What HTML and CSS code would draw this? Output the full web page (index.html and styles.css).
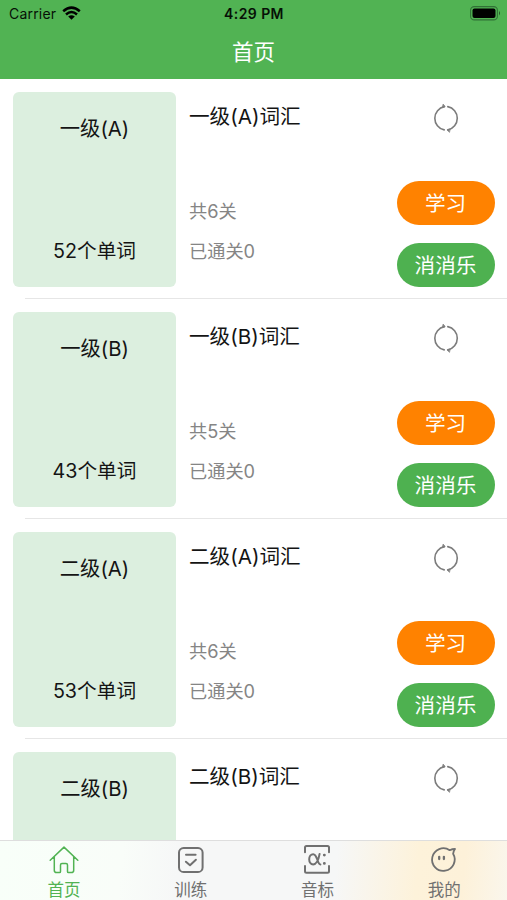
FILE: index.html
```html
<!DOCTYPE html>
<html lang="zh-CN">
<head>
<meta charset="utf-8">
<title>首页</title>
<link rel="stylesheet" href="styles.css">
</head>
<body>
<svg class="defs" aria-hidden="true">
  <symbol id="refresh" viewBox="0 0 28 32">
    <g fill="none" stroke="#7c7c7c" stroke-width="1.6" stroke-linecap="round" stroke-linejoin="round">
      <path d="M12.2 27.9A11.9 11.9 0 0 1 12.4 4.6M15.8 4.6A11.9 11.9 0 0 1 15.8 27.9"/>
      <path d="M11.4 2.4L13.1 4.6L10.6 5.4Z M17.2 30.1L15.3 27.9L17.9 27.1Z" fill="#7c7c7c" stroke-width=".8"/>
    </g>
  </symbol>
</svg>
<div class="app">
  <header class="header">
    <div class="status">
      <div class="carrier">Carrier
        <svg class="wifi" viewBox="0 0 19 14">
          <path d="M9.5 13.7L6.2 10.5Q9.5 7.8 12.8 10.5Z"/>
          <g fill="none" stroke="#000" stroke-width="2.5"><path d="M1.2 5.3Q9.5-2 17.8 5.3M4 8.5Q9.5 3.5 15 8.5"/></g>
        </svg>
      </div>
      <div class="clock">4:29 PM</div>
      <svg class="battery" viewBox="0 0 31 15">
        <rect x=".6" y=".6" width="26.8" height="13.3" rx="3.7" fill="none" stroke="#317136" stroke-width="1.1"/>
        <rect x="2.5" y="2.5" width="23" height="9.5" rx="2"/>
        <path d="M29 5Q31 7.2 29 9.5Z" fill="#26582a"/>
      </svg>
    </div>
    <h1 class="title">首页</h1>
  </header>
  <main class="list">
    <section class="row">
      <div class="cover"><span>一级(A)</span><span class="words">52个单词</span></div>
      <div class="info"><h2>一级(A)词汇</h2><p class="total">共6关</p><p>已通关0</p></div>
      <div class="actions"><svg class="refresh"><use href="#refresh"/></svg><button class="study">学习</button><button>消消乐</button></div>
    </section>
    <section class="row">
      <div class="cover"><span>一级(B)</span><span class="words">43个单词</span></div>
      <div class="info"><h2>一级(B)词汇</h2><p class="total">共5关</p><p>已通关0</p></div>
      <div class="actions"><svg class="refresh"><use href="#refresh"/></svg><button class="study">学习</button><button>消消乐</button></div>
    </section>
    <section class="row">
      <div class="cover"><span>二级(A)</span><span class="words">53个单词</span></div>
      <div class="info"><h2>二级(A)词汇</h2><p class="total">共6关</p><p>已通关0</p></div>
      <div class="actions"><svg class="refresh"><use href="#refresh"/></svg><button class="study">学习</button><button>消消乐</button></div>
    </section>
    <section class="row">
      <div class="cover"><span>二级(B)</span></div>
      <div class="info"><h2>二级(B)词汇</h2></div>
      <div class="actions"><svg class="refresh"><use href="#refresh"/></svg></div>
    </section>
  </main>
  <nav class="tabs">
    <a class="tab active">
      <svg viewBox="0 0 32 32"><path d="M2.2 16.2L16 3.1L29.8 16.2M6.3 12.6V26.2Q6.3 28.6 8.7 28.6H11.5Q12.5 28.6 12.5 27.4V21Q12.5 19.6 14 19.6H18Q19.5 19.6 19.5 21V27.4Q19.5 28.6 20.5 28.6H23.3Q25.7 28.6 25.7 26.2V12.6" stroke-width="1.5"/></svg>
      首页</a>
    <a class="tab">
      <svg viewBox="0 0 32 32"><rect x="4" y="4" width="23.6" height="24" rx="4.6"/><path d="M11 10.8H20.6M10.9 17.7L15 21.3L20.9 15.7"/></svg>
      训练</a>
    <a class="tab">
      <svg viewBox="0 0 32 32"><path d="M4 8.2V3.5Q4 2 5.5 2H26.5Q28 2 28 3.5V8.2M4 22V27.3Q4 28.8 5.5 28.8H26.5Q28 28.8 28 27.3V22M18.6 9.9Q16.8 20.4 12.1 20.4C9.8 20.4 8.2 18.2 8.2 15.3S9.8 10.2 12.2 10.2C16.4 10.2 16.4 20.5 19.4 20.5"/><path d="M23.3 11.1H23.4M23.3 19.4H23.4" stroke-width="2.8"/></svg>
      音标</a>
    <a class="tab">
      <svg viewBox="0 0 32 32"><path d="M21.7 6.2Q24.1 5.1 27 5Q25.7 6.7 25.1 9.8A11.3 11.3 0 1 1 21.7 6.2Z" stroke-width="1.8"/><path d="M11.2 12.8V15.1M15.9 12.8V15.1" stroke-width="2.3"/></svg>
      我的</a>
  </nav>
</div>
</body>
</html>
```
FILE: styles.css
```css
* { box-sizing: border-box; margin: 0; padding: 0; }

body {
  background: #fff;
  color: #141414;
  font-family: Inter, "Noto Sans CJK SC", sans-serif;
}

.defs { display: none; }

.app {
  display: flex;
  flex-direction: column;
  width: 507px;
  height: 900px;
  overflow: hidden;
}

.header { flex: none; height: 79px; background: #51b353; }

.status {
  display: grid;
  grid-template-columns: 1fr auto 1fr;
  align-items: center;
  height: 27px;
  padding: 0 6px 0 9px;
  color: #061006;
  font-size: 14px;
  line-height: 27px;
}

.carrier { display: flex; align-items: center; gap: 6px; letter-spacing: .2px; }
.wifi { width: 19px; height: 14px; margin-top: -1px; }
.clock { margin-left: -2px; font-weight: 600; letter-spacing: .42px; }
.battery { justify-self: end; width: 31px; height: 15px; }

.title {
  color: #fff;
  font-size: 21.5px;
  font-weight: 400;
  line-height: 50px;
  text-align: center;
}

.list { flex: 1; min-height: 0; overflow: hidden; padding-top: 13px; }

.row {
  display: grid;
  grid-template-columns: 163px 1fr 98px;
  column-gap: 13px;
  height: 207px;
  margin-bottom: 13px;
  padding: 0 12px 12px 13px;
  background: linear-gradient(#e6e6e6, #e6e6e6) 25px 100% / 482px 1px no-repeat;
}

.cover {
  display: flex;
  flex-direction: column;
  align-items: center;
  justify-content: space-between;
  padding: 22px 0 21px;
  border-radius: 6px;
  background: #dcefdf;
  font-size: 20.3px;
  line-height: 30px;
}

.words { font-size: 19.7px; }

.info h2 {
  padding-top: 10px;
  font-size: 20.6px;
  font-weight: 400;
  line-height: 30px;
}

.info p { color: #858585; font-size: 18.2px; line-height: 26px; }
.info .total { margin: 66px 0 14px; }

.actions { display: flex; flex-direction: column; align-items: center; }

.refresh { width: 28px; height: 32px; margin-top: 10px; }

.actions button {
  width: 98px;
  height: 44px;
  padding: 2px 1px 0 0;
  border: 0;
  border-radius: 22px;
  background: #4eb150;
  color: #fff;
  font: inherit;
  font-size: 20.6px;
  line-height: 42px;
}

.actions .study { margin: 46.5px 0 18px; background: #ff8200; }

.tabs {
  display: grid;
  grid-template-columns: repeat(4, 1fr);
  flex: none;
  height: 60px;
  border-top: 1px solid #dedede;
  background: linear-gradient(95deg, #f8fff9 0%, #f9fdf9 24%, #f6f7f7 35%, #f6f7f7 66%, #fdf2da 82%, #fdf1d9 91%, #faf6ec 100%);
}

.tab {
  display: flex;
  flex-direction: column;
  align-items: center;
  padding: 3px 0 0 1px;
  color: #707070;
  font-size: 16.5px;
  line-height: 28px;
}

.tab.active { color: #51b353; }

.tab svg {
  width: 32px;
  height: 32px;
  fill: none;
  stroke: currentColor;
  stroke-width: 2;
  stroke-linecap: round;
  stroke-linejoin: round;
}
```
